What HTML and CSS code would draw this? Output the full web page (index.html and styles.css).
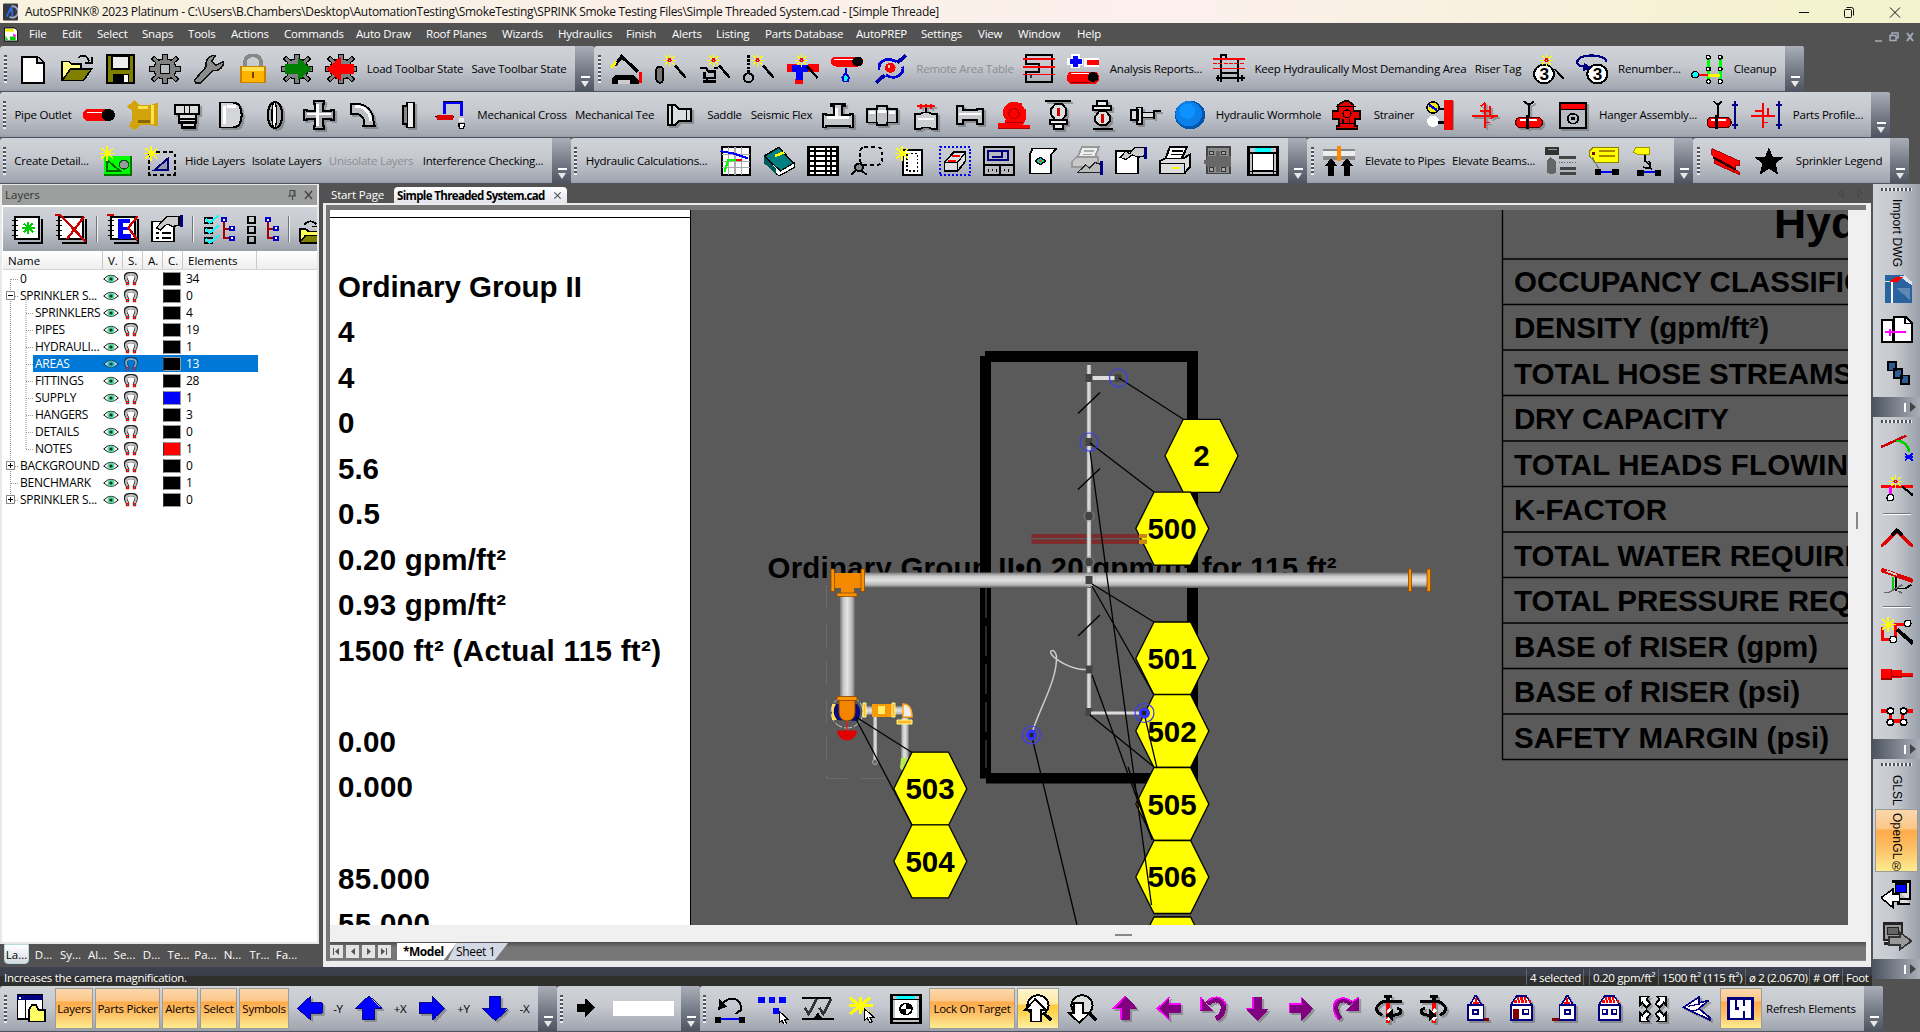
FILE: index.html
```html
<!DOCTYPE html>
<html lang="en">
<head>
<meta charset="utf-8">
<title>AutoSPRINK 2023 Platinum</title>
<link rel="stylesheet" href="styles.css">
</head>
<body>
<svg class="defs" width="0" height="0" aria-hidden="true">
  <defs>
    <g id="spark"><path d="M5 0v3M5 7v3M0 5h3M7 5h3M1.500 1.500l2 2M6.500 6.500l2 2M8.500 1.500l-2 2M3.500 6.500l-2 2" stroke="#ff0" stroke-width="1.200"/><path d="M4 3.500h2v1h1v1H6v1H4v-1H3v-1h1z" fill="red"/><path d="M4.500 4.500h1v1h-1z" fill="#0ff"/></g>
    <g id="star"><path d="M5 0v12M0 6h11M1 2l9 8M10 2l-9 8" stroke="#ff0" stroke-width="1.300"/></g>
    <g id="gearshape"><path d="M10 0h4v4l3 1 3-3 2 2-3 3 1 3h4v4h-4l-1 3 3 3-2 2-3-3-3 1v4h-4v-4l-3-1-3 3-2-2 3-3-1-3H0v-4h4l1-3-3-3 2-2 3 3 3-1z" fill="#808080" stroke="#000" stroke-width="1"/></g>

    <symbol id="new" viewBox="0 0 24 24"><path d="M4 2h11l5 5v16H4z" fill="#fff" stroke="#000" stroke-width="1.600"/><path d="M15 2v5h5" fill="#ccc" stroke="#000" stroke-width="1.400"/></symbol>
    <symbol id="open" viewBox="0 0 24 24"><path d="M1 21V6h5l2 2h7v4" fill="#ff8" stroke="#000" stroke-width="1.400"/><path d="M1 21l6-9h16l-6 9z" fill="#808000" stroke="#000" stroke-width="1.200"/><path d="M13 3c3-3 7-2 8 3M23 2v5h-5" fill="none" stroke="#000" stroke-width="1.400"/></symbol>
    <symbol id="save" viewBox="0 0 24 24"><path d="M1.500 1h20v22h-20z" fill="#808000" stroke="#000" stroke-width="1.600"/><path d="M5 2h13v10H5z" fill="#eee" stroke="#000" stroke-width="1.200"/><path d="M6 16h12v7H6z"/><path d="M14 17h3v5h-3z" fill="#fff"/></symbol>
    <symbol id="gear" viewBox="0 0 24 24"><use href="#gearshape"/><path d="M8.500 8.500h7v7h-7z" fill="#b8bbc0" stroke="#000"/></symbol>
    <symbol id="wrench" viewBox="0 0 24 24"><path d="M1 21l9-11c-1-5 2-9 7-9l-3 5 3 3 6-3c0 5-4 8-8 7L6 23H2z" fill="#8c8c8c" stroke="#111" stroke-width="1.200"/></symbol>
    <symbol id="lock" viewBox="0 0 24 24"><path d="M6 10V6a6 5 0 0 1 12 0v4" fill="none" stroke="#888" stroke-width="3"/><path d="M3 10h18v13H3z" fill="#ffb400" stroke="#c98300"/><path d="M3.500 10.500h17v3h-17z" fill="#ffe050"/><path d="M11 14h2v5h-2z" fill="#6b4700"/></symbol>
    <symbol id="gearload" viewBox="0 0 24 24"><use href="#gearshape"/><path d="M3 8h10V3l10 9-10 9v-5H3z" fill="#008000"/></symbol>
    <symbol id="gearsave" viewBox="0 0 24 24"><use href="#gearshape"/><path d="M22 8H12V2L1 12l11 10v-6h10z" fill="red"/></symbol>

    <symbol id="crane" viewBox="0 0 24 24"><path d="M3 9L8 2l12 12" fill="none" stroke="#000" stroke-width="2.600"/><path d="M0 11l4-5" stroke="#fff700" stroke-width="2"/><path d="M22 14v9" stroke="red" stroke-width="2"/><path d="M3 17h14l4 4v3H1v-5z"/><path d="M5 21h9v3H5z" fill="#ccc"/></symbol>
    <symbol id="wandpipe" viewBox="0 0 24 24"><rect x="1" y="10" width="5" height="13" rx="2.500" fill="#777" stroke="#000" stroke-width="1.500"/><path d="M15 9l8 10" stroke="#000" stroke-width="2"/><use href="#spark" x="6" y="0"/></symbol>
    <symbol id="wandcart" viewBox="0 0 24 24"><path d="M1 11h4l2 3h6M4 14v5h8v-5M3 22h10M6 19v3M11 11h3" fill="none" stroke="#000" stroke-width="1.700"/><path d="M15 9l8 10" stroke="#000" stroke-width="2"/><use href="#spark" x="6" y="0"/></symbol>
    <symbol id="wandhook" viewBox="0 0 24 24"><path d="M4 1v15" stroke="#000" stroke-width="2" stroke-dasharray="2 1"/><circle cx="4" cy="19" r="3.500" fill="none" stroke="#000" stroke-width="1.600"/><path d="M15 9l8 10" stroke="#000" stroke-width="2"/><use href="#spark" x="6" y="0"/></symbol>
    <symbol id="wandtee" viewBox="0 0 24 24"><path d="M0 8h8v6H0zM16 8h8v6h-8zM6 20h6v4H6z" fill="red"/><path d="M4 9h12v5h-4v7H7v-7H4z" fill="#00f"/><path d="M15 10l8 9" stroke="#000" stroke-width="2"/><use href="#spark" x="6" y="0"/></symbol>
    <symbol id="pipedrop" viewBox="0 0 24 24"><rect x="0" y="2" width="24" height="8" rx="3.500" fill="red"/><path d="M2 4h18" stroke="#fff" stroke-width=".8"/><circle cx="20" cy="6" r="4" fill="#000"/><path d="M11 11v4M8.500 19l2.500-4 2.500 4-1 3h-3z" fill="#0ff" stroke="#0000d0" stroke-width="1.500"/></symbol>
    <symbol id="orbit" viewBox="0 0 24 24"><path d="M1 23l6-6M17 7l6-6" stroke="#00a" stroke-width="2.800"/><path d="M3 13C2 6 8 2 16 6M21 10c1 7-6 11-13 7" fill="none" stroke="#0000d8" stroke-width="2.200"/><circle cx="11.500" cy="11" r="4" fill="red"/><circle cx="10.500" cy="10" r="1" fill="#fcc"/></symbol>
    <symbol id="areatable" viewBox="0 0 24 24"><path d="M2 1h20v21H2v-8h10V8H2z" fill="none" stroke="#000" stroke-width="1.600"/><path d="M0 4h24M0 10.500h24M0 16.500h24" stroke="red" stroke-width="1.300"/><path d="M6 4v1M6 17v2M17 10v1" stroke="#333"/></symbol>
    <symbol id="plusminus" viewBox="0 0 24 24"><path d="M3 0h7v11H3zM0 3h12v6H0zM13 3h11v7H13z" fill="#fff"/><path d="M6.500 1.500v9M2 6h9" stroke="#00f" stroke-width="3.500"/><path d="M15 5h9v4h-9z" fill="red"/><rect y="14" width="24" height="10" rx="4" fill="red"/><path d="M3 15.500h15" stroke="#fff"/><path d="M3 22.500h14" stroke="#800"/><circle cx="19.500" cy="18.500" r="4"/></symbol>
    <symbol id="demand" viewBox="0 0 24 24"><path d="M6 22V1h4v3h9v18M6 15h13M2 19h22" fill="none" stroke="#000" stroke-width="1.500"/><path d="M0 4h24M0 11.500h24" stroke="red" stroke-width="1.400"/><path d="M0 7.500h24" stroke="red" stroke-width="1.400" stroke-dasharray="3 1"/><path d="M4 16.500v5M22 16.500v5" stroke="#000" stroke-width="1.500"/></symbol>
    <symbol id="risertag" viewBox="0 0 24 24"><circle cx="9" cy="16" r="7.500" fill="#fff" stroke="#000" stroke-width="1.500"/><text x="5.500" y="21" font-size="13" class="t3">3</text><path d="M17 12l7 8" stroke="#000" stroke-width="1.500"/><use href="#spark" x="6"/></symbol>
    <symbol id="renum" viewBox="0 0 24 24"><circle cx="16" cy="16" r="7.500" fill="#fff" stroke="#000" stroke-width="1.500"/><text x="12.500" y="21" font-size="13" class="t3">3</text><path d="M23 6C21 0 6 0 2 4c-3 4 0 6 6 6" fill="none" stroke="#000080" stroke-width="1.800"/><path d="M6 7l6 4-7 3z" fill="#000080"/></symbol>
    <symbol id="cleanup" viewBox="0 0 24 24"><path d="M13 4v16M22 4v16" stroke="#0f0" stroke-width="2"/><path d="M13 17h9" stroke="#ff0" stroke-width="2.500"/><path d="M4 17h9" stroke="red" stroke-width="1.500"/><circle cx="3" cy="16.500" r="2.500" fill="#0ff" stroke="#000"/><g fill="#fff" stroke="#000"><circle cx="13" cy="2.500" r="1.500"/><circle cx="22" cy="2.500" r="1.500"/><circle cx="13" cy="12" r="1.500"/><circle cx="22" cy="12" r="1.500"/><circle cx="13" cy="22" r="1.500"/><circle cx="22" cy="22" r="1.500"/></g></symbol>

    <symbol id="pipe" viewBox="0 0 24 24"><path d="M3 7h16v10H3l-3-3v-4z" fill="red"/><path d="M3 10h12" stroke="#fff" stroke-width="1.500"/><circle cx="19" cy="12" r="5"/></symbol>
    <symbol id="brass" viewBox="0 0 24 24"><path d="M0 5l6-5 3 4h9l5-2v19l-6-1h-7l-4 4-5-3 3-5V9z" fill="#d3a30c"/><path d="M8 6h8M19 4v15" stroke="#ffe14d" stroke-width="2.500"/><path d="M8 17h9" stroke="#8b6500" stroke-width="2.500"/></symbol>
    <symbol id="plug" viewBox="0 0 24 24"><g fill="#ddd" stroke="#000" stroke-width="1.700"><path d="M3 4h18v7H3z"/><path d="M6 11h13v4H6zM6 15h13v3H6zM8 18h10v4H8z"/><path d="M10 4v7M14 4v7" stroke-width="1"/></g></symbol>
    <symbol id="cap" viewBox="0 0 24 24"><path d="M4 2h9c5 0 7 4 7 10s-2 10-7 10H4z" fill="#d4d5d9" stroke="#000" stroke-width="1.500"/><path d="M7 5v14M9 5h7" stroke="#fff" stroke-width="2"/></symbol>
    <symbol id="coupling" viewBox="0 0 24 24"><ellipse cx="12" cy="12" rx="5.500" ry="10.500" fill="#aaa" stroke="#000" stroke-width="1.600"/><ellipse cx="11.500" cy="12" rx="1.800" ry="10" fill="#fff" stroke="#000"/></symbol>
    <symbol id="cross" viewBox="0 0 24 24"><path d="M8 1h8v2h-1v6h6V8h2v8h-2v-1h-6v6h1v2H8v-2h1v-6H3v1H1V8h2v1h6V3H8z" fill="#aaacb0" stroke="#000" stroke-width="1.500"/><path d="M11 3v18M3 11h18" stroke="#fff" stroke-width="2"/></symbol>
    <symbol id="elbow" viewBox="0 0 24 24"><path d="M3 3h3c9 0 14 6 14 15l1 3h-9l1-3c0-4-3-7-7-7H3z" fill="#bcbec2" stroke="#000" stroke-width="1.500"/><path d="M6 5c7 0 11 4 12 12" stroke="#fff" fill="none" stroke-width="2"/></symbol>
    <symbol id="flange" viewBox="0 0 24 24"><path d="M12 2h5v20h-5z" fill="#eee" stroke="#000" stroke-width="1.500"/><path d="M12 5H9v14h3" fill="#888" stroke="#000" stroke-width="1.300"/></symbol>
    <symbol id="drain" viewBox="0 0 24 24"><path d="M7 11V2h13v11" fill="none" stroke="#00f" stroke-width="2.500"/><path d="M7 1h13" stroke="#000"/><path d="M0 13h14" stroke="#000"/><rect x="1" y="12" width="13" height="4" rx="2" fill="#d00"/><circle cx="20" cy="16" r="2" fill="#eee"/><path d="M18 19h4v2l-1 2h-2l-1-2z" fill="#fff" stroke="#000"/></symbol>
    <symbol id="reducer" viewBox="0 0 24 24"><path d="M3 4h5l3 3h9v10h-9l-3 3H3z" fill="#dcdde0" stroke="#000" stroke-width="1.500"/><path d="M6 4v16M17 7v10" stroke="#000" stroke-width="1.300"/></symbol>
    <symbol id="tee" viewBox="0 0 24 24"><path d="M7 3h10v2h-2v7h6v-1h2v11h-2v-1H3v1H1V11h2v1h6V5H7z" fill="#c6c8cc" stroke="#000" stroke-width="1.500"/><path d="M11 6v8M4 14h16" stroke="#fff" stroke-width="2"/></symbol>
    <symbol id="coup2" viewBox="0 0 24 24"><path d="M1 7h7V5h8v2h7v11h-7v2H8v-2H1z" fill="#bfc1c5" stroke="#000" stroke-width="1.500"/><path d="M8 7v11M16 7v11" stroke="#000"/><path d="M2 10h5M9 9h6M17 10h5" stroke="#fff" stroke-width="2"/></symbol>
    <symbol id="valve" viewBox="0 0 24 24"><path d="M5 5h14M8 3v4M12 3v4M16 3v4" stroke="red" fill="none" stroke-width="1.300"/><path d="M4 11h4l2-1h4l2 1h4v12h-4l-2-1h-4l-2 1H4z" fill="#cfd0d4" stroke="#000" stroke-width="1.500"/><path d="M12 6v4" stroke="#000" stroke-width="2"/><path d="M6 15h12" stroke="#fff" stroke-width="2"/></symbol>
    <symbol id="spool" viewBox="0 0 24 24"><path d="M2 5h5v3h10V7h5v12h-5v-3H7v3H2z" fill="#c6c8cc" stroke="#000" stroke-width="1.500"/><path d="M4 11h16" stroke="#fff" stroke-width="2"/></symbol>
    <symbol id="pump" viewBox="0 0 24 24"><path d="M10 2h8v5h3v8l-2 5h5v3H0v-5h5z" fill="red"/><circle cx="12" cy="10" r="8.500" fill="red"/><circle cx="12" cy="11" r="4" fill="none" stroke="#b00"/><path d="M0 22.500h24M5 18h14" stroke="#a00"/></symbol>
    <symbol id="uphead" viewBox="0 0 24 24"><path d="M2 1h20" stroke="#000" stroke-width="1.500"/><path d="M10 3h5l3 4v5l-3 4h-5l-3-4V7z" fill="#ddd" stroke="#000" stroke-width="1.400"/><path d="M6 16h13v3H6zM9 19h7v4H9z" fill="#eee" stroke="#000" stroke-width="1.400"/><path d="M12.500 6v7" stroke="#c00" stroke-width="2.500"/></symbol>
    <symbol id="pendent" viewBox="0 0 24 24"><path d="M5 23h15" stroke="#000" stroke-width="1.500"/><path d="M8 1h8v4H8zM5 5h14v3H5z" stroke="#000" stroke-width="1.400" fill="#eee"/><path d="M10 9h5l3 4v4l-3 3h-5l-3-3v-4z" fill="#ddd" stroke="#000" stroke-width="1.400"/><path d="M12.500 11v7" stroke="#c00" stroke-width="2.500"/></symbol>
    <symbol id="sidewall" viewBox="0 0 24 24"><path d="M1 8h5v8H1zM5 6h4v13H5zM9 10h9v4H9z" fill="#ddd" stroke="#000" stroke-width="1.400"/><path d="M18 15V9h5" stroke="#000" stroke-width="1.400" fill="none"/></symbol>
    <symbol id="ball" viewBox="0 0 24 24"><circle cx="12" cy="12" r="11.500" fill="#0057b0"/><circle cx="11" cy="11" r="10" fill="#0a80e8"/><circle cx="10" cy="9" r="6" fill="#0e92ff"/></symbol>
    <symbol id="hydrant" viewBox="0 0 24 24"><path d="M10 1h3l4 3v5h5v6h-4v6h2v2H4v-2h2v-6H1V9h4V4z" fill="#e80000" stroke="#100" stroke-width="1.300"/><path d="M4 5h15M6 19h12M9 15v4M14 15v4" stroke="#000"/><circle cx="12" cy="11" r="3" fill="#f00" stroke="#000"/></symbol>
    <symbol id="fdc" viewBox="0 0 24 24"><path d="M14 0h7v24h-7z" fill="red"/><path d="M21.500 1v23" stroke="#888"/><circle cx="6" cy="6" r="4.500" fill="#ee0" stroke="#000" stroke-width="1.300"/><path d="M3 4l6 4" stroke="#00f" stroke-width="2"/><circle cx="6" cy="17" r="4.500" fill="#fff"/><path d="M10 7h4M10 18h4" stroke="#000" stroke-width="2"/></symbol>
    <symbol id="gimbal" viewBox="0 0 24 24"><path d="M12 2v20M2 13h20M8 9h8M16 5v8M12 18h4M9 5l3-3M16 15l3-2" fill="none" stroke="red" stroke-width="1.400"/></symbol>
    <symbol id="hangpipe" viewBox="0 0 24 24"><path d="M8 1l4 3 4-3M12 4v10" fill="none" stroke="#000" stroke-width="1.600"/><rect x="2" y="14" width="20" height="8" rx="3.500" fill="red" stroke="#400"/><path d="M5 16h13" stroke="#fff" stroke-width="1.500"/><path d="M11 12v11" stroke="#000" stroke-width="2"/></symbol>
    <symbol id="washer" viewBox="0 0 24 24"><path d="M2 2h20v20H2z" fill="#b9bcc2" stroke="#000" stroke-width="1.600"/><path d="M3 3h18v4H3z" fill="red"/><path d="M2 7.500h20" stroke="#000"/><circle cx="12" cy="15" r="4" fill="none" stroke="#000" stroke-width="1.200"/><circle cx="12" cy="15" r="1.500"/></symbol>
    <symbol id="hangdim" viewBox="0 0 24 24"><path d="M5 1l3 3 3-3M8 4v10" fill="none" stroke="#000" stroke-width="1.500"/><rect y="14" width="18" height="8" rx="3.500" fill="red" stroke="#400"/><path d="M3 16h11" stroke="#fff"/><path d="M7 12v11" stroke="#000" stroke-width="2"/><path d="M21 1v22M19 4h4M19 20h4" stroke="#000080" stroke-width="1.500"/></symbol>
    <symbol id="gimdim" viewBox="0 0 24 24"><path d="M9 2v20M0 13h18M3 9h6M13 6v6M9 18h4" fill="none" stroke="red" stroke-width="1.500"/><path d="M21 1v22M19 4h4M19 20h4" stroke="#000080" stroke-width="1.500"/></symbol>

    <symbol id="detail" viewBox="0 0 24 24"><path d="M3 8h20v15H3z" fill="#0f0"/><path d="M3 23h20V8" fill="none" stroke="#007800" stroke-width="1.600"/><path d="M5 20V11l10 9z" fill="none" stroke="#060" stroke-width="1.500"/><circle cx="18" cy="15" r="3.500" fill="#999" stroke="#00501a"/><use href="#star"/></symbol>
    <symbol id="hidesel" viewBox="0 0 24 24"><path d="M4 5h19v18H4z" fill="none" stroke="#000" stroke-width="1.600" stroke-dasharray="3 2"/><path d="M8 19l10-9v9z" fill="#99a" stroke="#000080" stroke-width="1.500"/><use href="#star"/></symbol>
    <symbol id="graph" viewBox="0 0 24 24"><path d="M2 1h21v22H2z" fill="#fff" stroke="#000" stroke-width="1.600"/><path d="M7 1v22M12 1v22M17 1v22M2 7h21M2 12h21M2 17h21" stroke="#aaa" stroke-width=".8"/><path d="M1 4l10 2 11 4" stroke="#00f" fill="none" stroke-width="1.600"/><path d="M4 21l3-10h6" stroke="#0f0" fill="none" stroke-width="1.600"/><path d="M13 11h4" stroke="red" stroke-width="1.500"/></symbol>
    <symbol id="book" viewBox="0 0 24 24"><path d="M1 8L12 1l11 13-10 8z" fill="#008080" stroke="#000" stroke-width="1.200"/><path d="M1 8v5l11 11 12-7v-4l-11 7z" fill="#fff" stroke="#000"/><path d="M1 9v5l9 9v-5z" fill="#005a5a"/><path d="M9 8l7-3" stroke="#ff0" stroke-width="2"/></symbol>
    <symbol id="grid" viewBox="0 0 24 24"><path d="M1 1h22v22H1z" fill="#fff" stroke="#000" stroke-width="1.700"/><path d="M6 1v22M14 1v22M18 1v22M1 4h22M1 8h22M1 12h22M1 16h22M1 20h22" stroke="#000" stroke-width="1.300"/></symbol>
    <symbol id="maglasso" viewBox="0 0 24 24"><rect x="7" y="1" width="16" height="14" rx="3" fill="none" stroke="#000" stroke-width="1.500" stroke-dasharray="3 2"/><circle cx="6" cy="17" r="3" fill="#888" stroke="#000" stroke-width="1.500"/><path d="M4 19l-4 4M8 20l4 3" stroke="#000" stroke-width="1.500"/></symbol>
    <symbol id="newpage" viewBox="0 0 24 24"><path d="M6 3h14v20H6z" fill="#fff" stroke="#000" stroke-width="1.500"/><path d="M9 6h8v14H9z" fill="none" stroke="#000" stroke-dasharray="1.500 1.500"/><use href="#star"/></symbol>
    <symbol id="eraser" viewBox="0 0 24 24"><path d="M.7.700h22.600v22.600H.7z" fill="none" stroke="#00f" stroke-width="1.400" stroke-dasharray="1.500 1.500"/><path d="M4 13l7-8h9v7l-6 8H4z" fill="#ddd" stroke="#000" stroke-width="1.300"/><path d="M4 13h10v7M14 13l6-8" stroke="#000" fill="none"/><path d="M7 12h6M10 8h6" stroke="red" stroke-width="1.500"/></symbol>
    <symbol id="board" viewBox="0 0 24 24"><path d="M1 1h22v22H1z" fill="#b9bbc0" stroke="#000" stroke-width="1.600"/><path d="M4 4h15v7H4zM14 4v5H7" fill="none" stroke="#000080" stroke-width="1.400"/><path d="M1 15h22M13 15v8" stroke="#000" stroke-width="1.400" fill="none"/><path d="M4 18v3M7 18v2M10 18v3M16 18v2M19 18v3" stroke="#000"/></symbol>
    <symbol id="preview" viewBox="0 0 24 24"><path d="M4 2h18l-4 5v15H2V7z" fill="#fff" stroke="#000" stroke-width="1.400"/><path d="M6 12l4-3 4 3-4 3z" fill="#0cc" stroke="#000"/><path d="M9 12h2" stroke="#c60" stroke-width="2"/></symbol>
    <symbol id="printoff" viewBox="0 0 24 24"><path d="M8 1h13l-3 8H5z" fill="#eee" stroke="#999" stroke-width="1.400"/><path d="M1 12l3-3h16v8H1z" fill="#c8c8c8" stroke="#999" stroke-width="1.400"/><path d="M10 4h7M9 7h7" stroke="#aaa"/><path d="M5 21l6-6 3 3 4-5 5 2v6H10z" fill="#bbb" stroke="#222"/><path d="M23 12v11" stroke="#000080" stroke-width="2.500"/></symbol>
    <symbol id="props" viewBox="0 0 24 24"><path d="M1 4h16v18H1z" fill="#fff" stroke="#000" stroke-width="1.500"/><path d="M4 9l4-5 3 2 4-5h7v7l-5 1-4-2-5 4z" fill="#ccc" stroke="#000"/><path d="M23 1v9" stroke="#000080" stroke-width="2.500"/></symbol>
    <symbol id="print" viewBox="0 0 24 24"><path d="M8 1h13l-4 9H5z" fill="#fff" stroke="#000" stroke-width="1.500"/><path d="M1 12l3-2h14l5-3v10l-4 5H1z" fill="#ddd" stroke="#000" stroke-width="1.500"/><path d="M10 4h8M9 7h8M1 14h18v8" stroke="#000" fill="none"/><path d="M10 17.500h5" stroke="#ff0" stroke-width="2"/></symbol>
    <symbol id="puzzle" viewBox="0 0 24 24"><path d="M3 1h17v21H3z" fill="#8a8a8a" stroke="#444" stroke-width="1.400"/><path d="M5 4h3v3H5zM14 4h3v3h-3zM5 17h3v3H5zM14 17h3v3h-3z" fill="#aaa" stroke="#333" stroke-width=".8"/><path d="M3 8h7V4h3v4h8v9h-8v4h-3v-4H3v-3H1v-3h2z" fill="#686868"/></symbol>
    <symbol id="sheet" viewBox="0 0 24 24"><path d="M1 1h22v22H1z" fill="#c4c6cb" stroke="#000" stroke-width="1.700"/><path d="M4 6h16v14H4z" fill="#fff" stroke="#000" stroke-width="1.300"/><path d="M6 1.800h12v3H6z" fill="#0ff"/><path d="M1 5.500h22M1 20.500h22M4 20v3M20 20v3" stroke="#000"/></symbol>
    <symbol id="elev" viewBox="0 0 24 24"><path d="M0 2h24v9H0z" fill="#888"/><path d="M0 4h24v4H0z" fill="#eee"/><path d="M10.500 0h3v12h-3z" fill="#f80"/><path d="M6 10l5 6H8v8H4v-8H1zM18 10l5 6h-3v8h-4v-8h-3z"/></symbol>
    <symbol id="parts" viewBox="0 0 24 24"><path d="M1 1h10v6H1z" fill="#333"/><path d="M3 3h7" stroke="#999"/><path d="M5 9l4 3v9l-3 2-4-2v-9z" fill="#666"/><path d="M11 9h13M12 18h12M12 22h12" stroke="#444" stroke-width="2"/><path d="M11 13h13" stroke="#666" stroke-dasharray="1 1"/></symbol>
    <symbol id="tag" viewBox="0 0 24 24"><path d="M4 1h19v12H5L1 8V4z" fill="#ff0" stroke="#888000" stroke-width=".8"/><path d="M8 4h12M8 8h12" stroke="#a80"/><circle cx="4" cy="6" r="1.200" fill="#800"/><path d="M3 9l6 11" stroke="#777" fill="none"/><path d="M6 21h16" stroke="#00f" stroke-width="1.600"/><path d="M5 18h5v5H5zM18 18h5v5h-5z"/></symbol>
    <symbol id="tag2" viewBox="0 0 24 24"><path d="M3 1h10v6H5L1 5z" fill="#ff0" stroke="#990" stroke-width=".8"/><path d="M10 7v5l4 4M13 12l1 6-6-1" stroke="#000" fill="none" stroke-width="1.500"/><path d="M5 21h16" stroke="#00f" stroke-width="1.600"/><path d="M4 19h5v5H4zM17 19h5v5h-5z"/></symbol>
    <symbol id="beam" viewBox="0 0 24 24"><path d="M2 2l21 10v4l-3-1v4l3 2v2L4 14V9L2 7z" fill="red" stroke="#900" stroke-width=".7"/><path d="M3 9l17 10" stroke="#300" stroke-width="2"/></symbol>
    <symbol id="blackstar" viewBox="0 0 24 24"><path d="M12 1l3 8h8l-6 5 2 9-7-5-7 5 2-9-6-5h8z"/></symbol>

    <symbol id="panes" viewBox="0 0 24 24"><path d="M1 1h19v19H1z" fill="#fff" stroke="#000" stroke-width="1.300"/><path d="M1 1h19v4H1z" fill="#000080"/><path d="M2 2h2v2H2z" fill="#fff"/><path d="M7 5v15" stroke="#000" stroke-width="1.300"/><path d="M10 12l2-3h3l2 4h5v9H10z" fill="#ff6" stroke="#000" stroke-width="1.300"/></symbol>
    <symbol id="bleft" viewBox="0 0 24 24"><path d="M1 12L12 1v6h10v9H12v6z" fill="#00f" stroke="#000080" stroke-width=".8"/></symbol>
    <symbol id="bup" viewBox="0 0 24 24"><path d="M12 1l11 11h-6v10H7V12H1z" fill="#00f" stroke="#000080" stroke-width=".8"/></symbol>
    <symbol id="bright" viewBox="0 0 24 24"><path d="M22 12L12 1v6H1v9h11v6z" fill="#00f" stroke="#000080" stroke-width=".8"/></symbol>
    <symbol id="bdown" viewBox="0 0 24 24"><path d="M12 23L1 12h6V1h9v11h6z" fill="#00f" stroke="#000080" stroke-width=".8"/></symbol>
    <symbol id="kright" viewBox="0 0 24 24"><path d="M5 8h6V3l8 8-8 8v-5H5z"/></symbol>
    <symbol id="undim" viewBox="0 0 24 24"><path d="M6 8c8-9 16-2 14 5l-4 3" fill="none" stroke="#000" stroke-width="1.600"/><path d="M3 13l1-9 6 6z"/><path d="M3 20h18" stroke="#00f" stroke-width="1.600"/><path d="M1 18h4v5H1zM19 18h4v5h-4z"/></symbol>
    <g id="cursor"><path d="M0 0v9l2-2 2 4 1.500-1L4 6.500h3z" fill="#fff" stroke="#000"/></g>
    <symbol id="selblue" viewBox="0 0 24 24"><path d="M0 2h5v5H0zM8 2h5v5H8zM16 2h5v5h-5zM11 11h5v5h-5z" fill="#00f"/><use href="#cursor" x="16" y="14"/></symbol>
    <symbol id="checks" viewBox="0 0 24 24"><path d="M0 3h22M0 20h24" stroke="#000" stroke-width="1.500"/><path d="M2 11l3 5 6-12M13 11l3 5 6-12" fill="none" stroke="#333" stroke-width="2"/><path d="M8 20l4-5 4 5z"/></symbol>
    <symbol id="selstar" viewBox="0 0 24 24"><path d="M2 9h18M3 3l15 13M18 3L3 16M11 2v14" stroke="#ff0" stroke-width="2.400"/><use href="#cursor" x="14" y="12"/></symbol>
    <symbol id="target" viewBox="0 0 24 24"><path d="M1 1h22v22H1z" fill="#bfc1c6" stroke="#000" stroke-width="1.700"/><path d="M5 1.800h14v2H5z" fill="#0ff"/><path d="M4 5h16v15H4z" fill="#fff"/><path d="M1 4.500h22M1 20h22" stroke="#000"/><circle cx="12" cy="12" r="4.500" fill="#fff" stroke="#000" stroke-width="1.300"/><path d="M12 7.500V12h4.500a5 5 0 0 0-4.500-4.500M12 16.500V12H7.500a5 5 0 0 0 4.500 4.500"/></symbol>
    <symbol id="zoomin" viewBox="0 0 24 24"><circle cx="12" cy="9" r="8" fill="#fff" stroke="#000" stroke-width="1.500"/><path d="M16 15l6 6" stroke="#000" stroke-width="2.500"/><path d="M10 4l8 9h-4v9H7v-9H2z" fill="#fff" stroke="#000" stroke-width="1.500"/></symbol>
    <symbol id="zoomout" viewBox="0 0 24 24"><circle cx="12" cy="9" r="8" fill="#ddd" stroke="#000" stroke-width="1.500"/><path d="M17 15l6 6" stroke="#000" stroke-width="2.500"/><path d="M10 23l-8-8h4V7h7v8h5z" fill="#fff" stroke="#000" stroke-width="1.500"/></symbol>
    <symbol id="pup" viewBox="0 0 24 24"><path d="M12 1l10 11h-6v10H8V12H2z" fill="#800080"/><path d="M12 1L2 12h6v9" fill="none" stroke="#f0f" stroke-width="1.500"/></symbol>
    <symbol id="pleft" viewBox="0 0 24 24"><path d="M2 12L12 2v6h10v8H12v7z" fill="#800080"/><path d="M12 2L2 12l10 10M12 8h10" fill="none" stroke="#f0f" stroke-width="1.500"/></symbol>
    <symbol id="pdown" viewBox="0 0 24 24"><path d="M12 23L2 12h6V2h8v10h6z" fill="#800080"/><path d="M2 12h6V2" fill="none" stroke="#f0f" stroke-width="1.500"/></symbol>
    <symbol id="pright" viewBox="0 0 24 24"><path d="M22 12L12 2v6H2v8h10v7z" fill="#800080"/><path d="M2 16V8h10V2" fill="none" stroke="#f0f" stroke-width="1.500"/></symbol>
    <symbol id="pccw" viewBox="0 0 24 24"><path d="M7 8C12 1 22 5 20 13q-1 6-6 8" fill="none" stroke="#800080" stroke-width="4.500"/><path d="M1 2v12h11z" fill="#800080"/><path d="M1.500 2v11M7 5.500C12 0 20 1 22.500 9" fill="none" stroke="#f0f" stroke-width="1.400"/></symbol>
    <symbol id="pcw" viewBox="0 0 24 24"><path d="M17 8C12 1 2 5 4 13q1 6 4 8" fill="none" stroke="#800080" stroke-width="4.500"/><path d="M23 2v12H12z" fill="#800080"/><path d="M23 2l-5 4M17 5.500C10 0 1 3 2 13q1 5 4 9" fill="none" stroke="#f0f" stroke-width="1.400"/></symbol>
    <symbol id="rot1" viewBox="0 0 24 24"><path d="M11.500 1v22" stroke="red" stroke-width="3"/><path d="M11 5l2-2M11 15l2-3M11 21l2-3" stroke="#fff" stroke-width="2.500"/><path d="M8 2h6M22 6H8C1 9 1 14 7 17M18 11c6 3 2 6-4 6h-4" fill="none" stroke="#000" stroke-width="2.300"/><path d="M15 12v10l-5-5zM10 1h3v4h-3z"/></symbol>
    <symbol id="rot2" viewBox="0 0 24 24"><path d="M12.500 1v22" stroke="red" stroke-width="3"/><path d="M12 5l2-2M12 15l2-3M12 21l2-3" stroke="#fff" stroke-width="2.500"/><path d="M10 2h6M2 6h14c7 3 7 8 1 11M6 11c-6 3-2 6 4 6h4" fill="none" stroke="#000" stroke-width="2.300"/><path d="M9 12v10l5-5zM11 1h3v4h-3z"/></symbol>
    <symbol id="house1" viewBox="0 0 24 24"><path d="M14 20h8v3h-8z" fill="#800000"/><path d="M4 9h13v13H4z" fill="#fff" stroke="#000080" stroke-width="1.600"/><path d="M10.500 0l5 9h-10z" fill="#fff" stroke="#000080" stroke-width="1.400"/><path d="M10.500 3v5M8 7h5" stroke="red" stroke-width="1.500"/><path d="M8.500 13h4v4h-4z" fill="#fff" stroke="#000080" stroke-width="1.600"/></symbol>
    <symbol id="house2" viewBox="0 0 24 24"><path d="M3 9h18v13H3z" fill="#fff" stroke="#000080" stroke-width="1.600"/><path d="M8 1h8l5 8H3z" fill="#fff" stroke="#000080" stroke-width="1.400"/><path d="M8 3h9M6 6h14" stroke="red" stroke-width="2.500" stroke-dasharray="2 1"/><path d="M5 12h5v9H5z" fill="#800000"/><path d="M13 13h5v4h-5z" fill="#fff" stroke="#000080" stroke-width="1.400"/></symbol>
    <symbol id="house3" viewBox="0 0 24 24"><path d="M1 20h8v3H1z" fill="#800000"/><path d="M7 9h13v13H7z" fill="#fff" stroke="#000080" stroke-width="1.600"/><path d="M13.500 0l5 9h-10z" fill="#fff" stroke="#000080" stroke-width="1.400"/><path d="M13.500 3v5M11 7h5" stroke="red" stroke-width="1.500"/><path d="M11.500 13h4v4h-4z" fill="#fff" stroke="#000080" stroke-width="1.600"/></symbol>
    <symbol id="house4" viewBox="0 0 24 24"><path d="M3 9h18v13H3z" fill="#fff" stroke="#000080" stroke-width="1.600"/><path d="M8 1h8l5 8H3z" fill="#fff" stroke="#000080" stroke-width="1.400"/><path d="M8 3h9M6 6h14" stroke="red" stroke-width="2.500" stroke-dasharray="2 1"/><path d="M6 13h4v4H6zM14 13h4v4h-4z" fill="#fff" stroke="#000080" stroke-width="1.400"/></symbol>
    <symbol id="fit" viewBox="0 0 24 24"><path d="M2 2h7L7 4l3 4-3 3-3-4-2 2zM22 2h-7l2 2-3 4 3 3 3-4 2 2zM2 22h7l-2-2 3-4-3-3-3 4-2-2zM22 22h-7l2-2-3-4 3-3 3 4 2-2z" fill="#fff" stroke="#000" stroke-width="1.400"/></symbol>
    <symbol id="plane" viewBox="0 0 24 24"><path d="M1 11L14 2v5l8-2-8 7 9 8v2z" fill="#fff" stroke="#000080" stroke-width="1.500"/><path d="M5 10l10-2M7 14l8-1" stroke="#000080"/></symbol>
    <symbol id="plan" viewBox="0 0 24 24"><path d="M2 3h20v18H2z" fill="#fff" stroke="#000080" stroke-width="2"/><path d="M8 3v9h3M15 3v7M15 14v7" stroke="#000080" stroke-width="2" fill="none"/></symbol>

    <symbol id="mapfold" viewBox="0 0 24 24"><path d="M3 1h15l5 5v17H3z" fill="#2a639f"/><path d="M14 2l9 7v-3l-5-5z" fill="#dce6f0"/><path d="M3 6h10" stroke="#e8eef4" stroke-width="1.500"/><path d="M8.500 5v18" stroke="#fff" stroke-width="1.400"/><path d="M7 6l4-4h6l-5 5z" fill="red"/><path d="M11 11h11v10z" fill="#5d88b4"/></symbol>
    <symbol id="pages" viewBox="0 0 24 24"><path d="M1 3h8v18H1zM10 1h9l4 4v16H10z" fill="#fff" stroke="#000" stroke-width="1.500"/><path d="M18 1v5h5" fill="none" stroke="#000"/><path d="M3 13h16M7 10v6" stroke="#f0f" stroke-width="1.500"/></symbol>
    <symbol id="cubes" viewBox="0 0 24 24"><path d="M5 3h6v7H5zM10 9h6v7h-6zM15 14h6v7h-6z" fill="#2b5d94" stroke="#000" stroke-width="1.500"/></symbol>
    <symbol id="armover" viewBox="0 0 24 24"><path d="M0 12l19-9" stroke="#c00" stroke-width="2"/><path d="M11 7c6 0 10 4 10 9" stroke="#0c0" stroke-width="2" fill="none"/><path d="M18 17l6 6M24 17l-6 6M18 20h6" stroke="#00f" stroke-width="1.300"/></symbol>
    <symbol id="wandline" viewBox="0 0 24 24"><path d="M0 10h24" stroke="red" stroke-width="2"/><path d="M7 10v6" stroke="#f0f" stroke-width="2"/><circle cx="7" cy="19" r="2.500" fill="#fff" stroke="#000"/><path d="M16 10l8 7" stroke="#000" stroke-width="1.700"/><use href="#spark" x="6" y="1"/></symbol>
    <symbol id="peak" viewBox="0 0 24 24"><path d="M0 18L12 6l12 12" stroke="#d00" stroke-width="2.500" fill="none"/><path d="M8 9l4-4 4 4" stroke="#000" stroke-width="2.500" fill="none"/></symbol>
    <symbol id="slope" viewBox="0 0 24 24"><path d="M0 3l24 9" stroke="#d00" stroke-width="3.500"/><path d="M4 4l8 3" stroke="#ccc" stroke-width="1.500"/><path d="M9 9v11" stroke="#0c0" stroke-width="2"/><path d="M11.500 9v11M12 18h6l5-3" stroke="#000" stroke-width="1.500" fill="none"/><path d="M2 21h4l10-6M13 20l3 2" stroke="#666" stroke-width="1.200" fill="none"/></symbol>
    <symbol id="wandroute" viewBox="0 0 24 24"><path d="M1 8v10h10V6h8" stroke="red" stroke-width="2.500" fill="none"/><path d="M12 10l12 11" stroke="#000" stroke-width="3"/><circle cx="20" cy="5" r="2.500" fill="#fff" stroke="#000"/><circle cx="9" cy="18" r="2.500" fill="#fff" stroke="#000"/><use href="#star" x="0" y="0"/></symbol>
    <symbol id="redtool" viewBox="0 0 24 24"><path d="M0 8h8v8H0zM8 9h8v6H8zM16 11h8v3h-8z" fill="red"/><path d="M0 16h8v-8M8 14h8M16 14h8" stroke="#900" fill="none"/></symbol>
    <symbol id="nodes" viewBox="0 0 24 24"><path d="M0 8h7v8h9V8h8" stroke="red" stroke-width="2.500" fill="none"/><g fill="#fff" stroke="#000" stroke-width="1.200"><circle cx="7" cy="8" r="2.400"/><circle cx="17" cy="8" r="2.400"/><circle cx="7" cy="17" r="2.400"/><circle cx="17" cy="17" r="2.400"/></g></symbol>
    <symbol id="moncolor" viewBox="0 0 24 24"><path d="M8 2h14v14h-9v4h9" fill="#ddd" stroke="#000" stroke-width="1.800"/><path d="M11 4h8v7h-8z" fill="#00f" stroke="#000"/><path d="M0 15l9-7v4h5v6H9v5z" fill="#fff" stroke="#000" stroke-width="1.200"/></symbol>
    <symbol id="mongray" viewBox="0 0 24 24"><path d="M2 2h14v13H2zM2 18h14" fill="#999" stroke="#222" stroke-width="1.800"/><path d="M5 5h8v6H5z" fill="#666" stroke="#222"/><path d="M6 13h8V9l9 7-9 7v-4H6z" fill="#999" stroke="#333" stroke-width="1.300"/></symbol>

    <g id="notebook"><path d="M3 2h18v18H3z" fill="#fff" stroke="#000" stroke-width="1.600"/><path d="M23 4v19H5" stroke="#000" fill="none" stroke-width="1.400"/><path d="M1 5h4M1 9h4M1 13h4M1 17h4" stroke="#000"/></g>
    <symbol id="lnew" viewBox="0 0 24 24"><use href="#notebook"/><path d="M13 6v10M8 11h10M9.500 7.500l7 7M16.500 7.500l-7 7" stroke="#0c0" stroke-width="1.500"/></symbol>
    <symbol id="ldel" viewBox="0 0 24 24"><use href="#notebook"/><path d="M0 1h4l19 21M22 2L9 20" fill="none" stroke="#c00" stroke-width="1.800"/></symbol>
    <symbol id="ledit" viewBox="0 0 24 24"><use href="#notebook"/><path d="M8 4h9v3h-5v3h4v3h-4v3h6v4H8z" fill="#00f"/><path d="M0 1h5M23 2l-7 9 7 10" stroke="#c00" fill="none" stroke-width="1.800"/></symbol>
    <symbol id="lprops" viewBox="0 0 24 24"><path d="M1 6h16v16H1z" fill="#fff" stroke="#000" stroke-width="1.500"/><path d="M4 15h2M8 15h7M4 19h2M8 19h7" stroke="#000" stroke-width="1.400"/><path d="M4 11l8-9h9v7l-5 1-4-2-5 5z" fill="#ccc" stroke="#000"/><path d="M23 1v9" stroke="#000080" stroke-width="2.500"/></symbol>
    <symbol id="lchecks" viewBox="0 0 24 24"><path d="M1 3h6v4H1zM1 11h6v4H1zM1 19h6v4H1z" fill="none" stroke="#000" stroke-width="1.300"/><path d="M2 4l3 3 7-6M2 12l3 3 7-6M2 20l3 3 7-6" fill="none" stroke="#0ff" stroke-width="1.500"/><path d="M16 6v13h4M16 12h4" stroke="#a00000" fill="none" stroke-width="1.500"/><path d="M14 3h3v3h-3zM20 10h3v3h-3zM20 18h3v3h-3z" fill="#fff" stroke="#00c" stroke-width="1.500"/></symbol>
    <symbol id="ltree" viewBox="0 0 24 24"><path d="M1 2h5v5H1zM1 10h5v5H1zM1 18h5v5H1z" fill="none" stroke="#000" stroke-width="1.500"/><path d="M16 6v13h4M16 12h4" stroke="#a00000" fill="none" stroke-width="1.500"/><path d="M14 3h3v3h-3zM20 10h3v3h-3zM20 18h3v3h-3z" fill="#fff" stroke="#00c" stroke-width="1.500"/></symbol>
    <symbol id="lopen" viewBox="0 0 24 24"><path d="M1 22V12h4l2 2h12v4" fill="#ff5" stroke="#000" stroke-width="1.400"/><path d="M1 22l4-5h18l-4 6H1z" fill="#808000" stroke="#000" stroke-width="1.200"/><path d="M4 9c2-4 6-4 9-1M14 5v5h-4" fill="none" stroke="#000" stroke-width="1.400"/></symbol>
    <symbol id="eye" viewBox="0 0 16 10"><path d="M.7 5Q8-2.500 15.300 5 8 12 .7 5z" fill="#fff" stroke="#111"/><circle cx="8" cy="5" r="3.500" fill="#59d69b"/><circle cx="8" cy="5" r="1.600" fill="#032"/></symbol>
    <symbol id="magnet" viewBox="0 0 14 14"><path d="M3.500 12.500V10C-1.500 2 4 1.500 7 1.500S15 2 10.500 10v2.500" fill="none" stroke="#222" stroke-width="3.400"/><path d="M3.500 11.500V10C-.5 3 4 2 7 2s7.500 1 3.500 8v1.500" fill="none" stroke="#c4c4c4" stroke-width="1.800"/><path d="M2 10.500h3M9 10.500h3M2 12.700h3M9 12.700h3" stroke="red" stroke-width="1.200"/></symbol>
  </defs>
</svg>

<header class="title">
  <svg class="logo" viewBox="0 0 16 18"><rect width="16" height="18" rx="1" fill="#35383f"/><path d="M9 3a6 6 0 1 1-2 11" fill="none" stroke="#aab" stroke-width="2"/><path d="M3 14L8 3h2l1 11H9V9H7l-2 5z" fill="#2d6cf0"/></svg>
  <span class="title-text">AutoSPRINK® 2023 Platinum - C:\Users\B.Chambers\Desktop\AutomationTesting\SmokeTesting\SPRINK Smoke Testing Files\Simple Threaded System.cad - [Simple Threade]</span>
  <svg class="winbtns" viewBox="0 0 110 20" fill="none" stroke="#111"><path d="M7 10.500h10"/><rect x="52.500" y="7.500" width="7" height="8" rx="1"/><path d="M54.500 5.500h5q2 0 2 2v6"/><path d="M98 5.500l10 10M108 5.500l-10 10"/></svg>
</header>
<nav class="menu">
  <svg class="mlogo" viewBox="0 0 16 16"><path d="M1 1h11l3 3v11H1z" fill="#fff" stroke="#000"/><path d="M2 2h9v3H2z" fill="#ee0"/><path d="M2 9l3 5H2zM7 10h6v4H7z" fill="#0c0"/><path d="M10 7l4 2-3 2z" fill="#f0f"/></svg>
  <span>File</span><span>Edit</span><span>Select</span><span>Snaps</span><span>Tools</span><span>Actions</span><span>Commands</span><span>Auto Draw</span><span>Roof Planes</span><span>Wizards</span><span>Hydraulics</span><span>Finish</span><span>Alerts</span><span>Listing</span><span>Parts Database</span><span>AutoPREP</span><span>Settings</span><span>View</span><span>Window</span><span>Help</span>
  <svg class="mdi" viewBox="0 0 44 14" fill="none" stroke="#a3acba" stroke-width="1.500"><path d="M1 11h7"/><path d="M16 5.500h6v5h-6zM18 5V3h6v5h-2"/><path d="M33 3l6 8M39 3l-6 8" stroke-width="2"/></svg>
</nav>

<div class="bar">
  <div class="tb tb-file"><i class="grip"></i>
    <svg class="ic"><use href="#new"/></svg><svg class="ic"><use href="#open"/></svg><svg class="ic"><use href="#save"/></svg><svg class="ic"><use href="#gear"/></svg><svg class="ic"><use href="#wrench"/></svg><svg class="ic"><use href="#lock"/></svg><svg class="ic"><use href="#gearload"/></svg><svg class="ic"><use href="#gearsave"/></svg>
    <span>Load Toolbar State</span><span>Save Toolbar State</span><b class="more"></b></div>
  <div class="tb tb-hyd"><i class="grip"></i>
    <svg class="ic"><use href="#crane"/></svg><svg class="ic"><use href="#wandpipe"/></svg><svg class="ic"><use href="#wandcart"/></svg><svg class="ic"><use href="#wandhook"/></svg><svg class="ic"><use href="#wandtee"/></svg><svg class="ic"><use href="#pipedrop"/></svg><svg class="ic"><use href="#orbit"/></svg>
    <span class="off">Remote Area Table</span><svg class="ic"><use href="#areatable"/></svg><svg class="ic"><use href="#plusminus"/></svg><span>Analysis Reports...</span><svg class="ic"><use href="#demand"/></svg><span>Keep Hydraulically Most Demanding Area</span><span>Riser Tag</span><svg class="ic"><use href="#risertag"/></svg><svg class="ic"><use href="#renum"/></svg><span>Renumber...</span><svg class="ic"><use href="#cleanup"/></svg><span>Cleanup</span><b class="more"></b></div>
</div>
<div class="bar">
  <div class="tb tb-parts"><i class="grip"></i>
    <span>Pipe Outlet</span><svg class="ic"><use href="#pipe"/></svg><svg class="ic"><use href="#brass"/></svg><svg class="ic sh"><use href="#plug"/></svg><svg class="ic sh"><use href="#cap"/></svg><svg class="ic sh"><use href="#coupling"/></svg><svg class="ic sh"><use href="#cross"/></svg><svg class="ic sh"><use href="#elbow"/></svg><svg class="ic sh"><use href="#flange"/></svg><svg class="ic"><use href="#drain"/></svg>
    <span>Mechanical Cross</span><span>Mechanical Tee</span><svg class="ic sh"><use href="#reducer"/></svg><span>Saddle</span><span>Seismic Flex</span>
    <svg class="ic sh"><use href="#tee"/></svg><svg class="ic sh"><use href="#coup2"/></svg><svg class="ic sh"><use href="#valve"/></svg><svg class="ic sh"><use href="#spool"/></svg><svg class="ic"><use href="#pump"/></svg><svg class="ic sh"><use href="#uphead"/></svg><svg class="ic sh"><use href="#pendent"/></svg><svg class="ic sh"><use href="#sidewall"/></svg><svg class="ic"><use href="#ball"/></svg>
    <span>Hydraulic Wormhole</span><svg class="ic"><use href="#hydrant"/></svg><span>Strainer</span><svg class="ic"><use href="#fdc"/></svg><svg class="ic sh"><use href="#gimbal"/></svg><svg class="ic sh"><use href="#hangpipe"/></svg><svg class="ic sh"><use href="#washer"/></svg><span>Hanger Assembly...</span><svg class="ic"><use href="#hangdim"/></svg><svg class="ic"><use href="#gimdim"/></svg><span>Parts Profile...</span><b class="more"></b></div>
</div>
<div class="bar">
  <div class="tb tb-detail"><i class="grip"></i><span>Create Detail...</span><svg class="ic"><use href="#detail"/></svg><svg class="ic"><use href="#hidesel"/></svg><span>Hide Layers</span><span>Isolate Layers</span><span class="off">Unisolate Layers</span><span>Interference Checking...</span><b class="more"></b></div>
  <div class="tb tb-calc"><i class="grip"></i><span>Hydraulic Calculations...</span><svg class="ic"><use href="#graph"/></svg><svg class="ic"><use href="#book"/></svg><svg class="ic"><use href="#grid"/></svg><svg class="ic"><use href="#maglasso"/></svg><svg class="ic"><use href="#newpage"/></svg><svg class="ic"><use href="#eraser"/></svg><svg class="ic"><use href="#board"/></svg><svg class="ic"><use href="#preview"/></svg><svg class="ic"><use href="#printoff"/></svg><svg class="ic"><use href="#props"/></svg><svg class="ic"><use href="#print"/></svg><svg class="ic"><use href="#puzzle"/></svg><svg class="ic"><use href="#sheet"/></svg><b class="more"></b></div>
  <div class="tb tb-elev"><i class="grip"></i><svg class="ic"><use href="#elev"/></svg><span>Elevate to Pipes</span><span>Elevate Beams...</span><svg class="ic"><use href="#parts"/></svg><svg class="ic"><use href="#tag"/></svg><svg class="ic"><use href="#tag2"/></svg><b class="more"></b></div>
  <div class="tb tb-leg"><i class="grip"></i><svg class="ic"><use href="#beam"/></svg><svg class="ic"><use href="#blackstar"/></svg><span>Sprinkler Legend</span><b class="more"></b></div>
</div>

<div class="work">
  <div class="left-and-doc">
    <div class="main">
      <aside class="side">
        <div class="panel">
          <div class="phead"><span>Layers</span><svg viewBox="0 0 28 12" fill="none" stroke="#444"><path d="M2 7h8M4 7V1.500h5V7M6.500 7v4M8 2v5"/><path d="M19 2l7 8M26 2l-7 8" stroke-width="1.400"/></svg></div>
          <div class="ptools"><svg class="ic"><use href="#lnew"/></svg><svg class="ic"><use href="#ldel"/></svg><i class="sep"></i><svg class="ic"><use href="#ledit"/></svg><svg class="ic"><use href="#lprops"/></svg><i class="sep"></i><svg class="ic"><use href="#lchecks"/></svg><svg class="ic"><use href="#ltree"/></svg><i class="sep"></i><svg class="ic"><use href="#lopen"/></svg></div>
          <div class="row thead"><span>Name</span><span>V.</span><span>S.</span><span>A.</span><span>C.</span><span>Elements</span><span></span></div>
          <div class="tree">
            <svg class="lines" width="36" height="238" fill="none"><path d="M7.500 9v221M8 9.500h7M8 26.500h7M8 196.500h7M8 213.500h7M8 230.500h7M23 26v153M23 43.500h7M23 60.500h7M23 77.500h7M23 94.500h7M23 111.500h7M23 128.500h7M23 145.500h7M23 162.500h7M23 179.500h7" stroke="#999" stroke-dasharray="1 1"/><g fill="#fff" stroke="#848484"><path d="M3.500 21.500h8v8h-8zM3.500 191.500h8v8h-8zM3.500 225.500h8v8h-8z"/></g><path d="M5 25.500h5M5 195.500h5M7.500 193v5M5 229.500h5M7.500 227v5" stroke="#000"/></svg>
            <div class="row"><span>0</span><svg><use href="#eye"/></svg><svg class="m"><use href="#magnet"/></svg><i></i><b></b><em>34</em></div>
            <div class="row"><span>SPRINKLER S...</span><svg><use href="#eye"/></svg><svg class="m"><use href="#magnet"/></svg><i></i><b></b><em>0</em></div>
            <div class="row sub"><span>SPRINKLERS</span><svg><use href="#eye"/></svg><svg class="m"><use href="#magnet"/></svg><i></i><b></b><em>4</em></div>
            <div class="row sub"><span>PIPES</span><svg><use href="#eye"/></svg><svg class="m"><use href="#magnet"/></svg><i></i><b></b><em>19</em></div>
            <div class="row sub"><span>HYDRAULI...</span><svg><use href="#eye"/></svg><svg class="m"><use href="#magnet"/></svg><i></i><b></b><em>1</em></div>
            <div class="row sub sel"><span>AREAS</span><svg><use href="#eye"/></svg><svg class="m"><use href="#magnet"/></svg><i></i><b></b><em>13</em></div>
            <div class="row sub"><span>FITTINGS</span><svg><use href="#eye"/></svg><svg class="m"><use href="#magnet"/></svg><i></i><b></b><em>28</em></div>
            <div class="row sub"><span>SUPPLY</span><svg><use href="#eye"/></svg><svg class="m"><use href="#magnet"/></svg><i></i><b class="blue"></b><em>1</em></div>
            <div class="row sub"><span>HANGERS</span><svg><use href="#eye"/></svg><svg class="m"><use href="#magnet"/></svg><i></i><b></b><em>3</em></div>
            <div class="row sub"><span>DETAILS</span><svg><use href="#eye"/></svg><svg class="m"><use href="#magnet"/></svg><i></i><b></b><em>0</em></div>
            <div class="row sub"><span>NOTES</span><svg><use href="#eye"/></svg><svg class="m"><use href="#magnet"/></svg><i></i><b class="red"></b><em>1</em></div>
            <div class="row"><span>BACKGROUND</span><svg><use href="#eye"/></svg><svg class="m"><use href="#magnet"/></svg><i></i><b></b><em>0</em></div>
            <div class="row"><span>BENCHMARK</span><svg><use href="#eye"/></svg><svg class="m"><use href="#magnet"/></svg><i></i><b></b><em>1</em></div>
            <div class="row"><span>SPRINKLER S...</span><svg><use href="#eye"/></svg><svg class="m"><use href="#magnet"/></svg><i></i><b></b><em>0</em></div>
          </div>
        </div>
        <div class="ptabs"><span class="on">La...</span><span>D...</span><span>Sy...</span><span>Al...</span><span>Se...</span><span>D...</span><span>Te...</span><span>Pa...</span><span>N...</span><span>Tr...</span><span>Fa...</span></div>
      </aside>

      <section class="doc">
        <div class="dtabs"><span class="dtab">Start Page</span><span class="dtab on">Simple Threaded System.cad<svg viewBox="0 0 10 10"><path d="M1.500 1.500l7 7M8.500 1.500l-7 7" stroke="#555" stroke-width="1.300"/></svg></span><svg class="nav" viewBox="0 0 30 12" fill="none" stroke="#444"><path d="M6 2v8L2 6zM21 2v8l4-4z"/></svg></div>
        <div class="frame">
          <div class="view">
            <svg class="canvas" width="1518" height="715" viewBox="330 210 1518 715">
              <defs>
                <linearGradient id="ph" x2="0" y2="1"><stop offset="0" stop-color="#777"/><stop offset=".25" stop-color="#ccc"/><stop offset=".5" stop-color="#e2e2e2"/><stop offset=".8" stop-color="#b5b5b5"/><stop offset="1" stop-color="#555"/></linearGradient>
                <linearGradient id="pv"><stop offset="0" stop-color="#777"/><stop offset=".25" stop-color="#ccc"/><stop offset=".5" stop-color="#e2e2e2"/><stop offset=".8" stop-color="#b5b5b5"/><stop offset="1" stop-color="#666"/></linearGradient>
                <g id="hex"><path d="M-36.500 0L-18.300-36.500H18.300L36.500 0 18.300 36.500H-18.300z" fill="#ff0" stroke="#000" stroke-width="1.300"/></g>
                <g id="cpl"><path d="M-3.500-4h7v8h-7z" fill="#444"/></g>
              </defs>
              <rect x="330" y="210" width="1518" height="715" fill="#5a5a5a"/>
              <rect x="330" y="210" width="360" height="715" fill="#fff"/>
              <path d="M330 217.500h361M690.500 210v715" stroke="#000"/>
              <g class="cad"><text x="338" y="296.500" textLength="244">Ordinary Group II</text><text x="338" y="341.500">4</text><text x="338" y="387.500">4</text><text x="338" y="432.500">0</text><text x="338" y="478.500" textLength="41">5.6</text><text x="338" y="524" textLength="42">0.5</text><text x="338" y="569.500" textLength="168">0.20 gpm/ft²</text><text x="338" y="615" textLength="168">0.93 gpm/ft²</text><text x="338" y="660.500" textLength="323">1500 ft² (Actual 115 ft²)</text><text x="338" y="751.500" textLength="58">0.00</text><text x="338" y="797" textLength="75">0.000</text><text x="338" y="888.500" textLength="92">85.000</text><text x="338" y="934" textLength="92">55.000</text></g>
              <path d="M1502.500 210v549.500M1502 259h346M1502 304.500h346M1502 350h346M1502 395.500h346M1502 441h346M1502 486.500h346M1502 532h346M1502 577.500h346M1502 623h346M1502 668.500h346M1502 714h346M1502 759.500h346" fill="none" stroke="#000" stroke-width="1.400"/>
              <g class="cad"><text x="1774" y="238" class="big">Hyd</text><text x="1514" y="292">OCCUPANCY CLASSIFIC</text><text x="1514" y="337.500" textLength="255">DENSITY (gpm/ft²)</text><text x="1514" y="383.500">TOTAL HOSE STREAMS</text><text x="1514" y="428.500" textLength="215">DRY CAPACITY</text><text x="1514" y="474.500" textLength="334">TOTAL HEADS FLOWIN</text><text x="1514" y="519.500" textLength="153">K-FACTOR</text><text x="1514" y="565.500">TOTAL WATER REQUIRE</text><text x="1514" y="610.500">TOTAL PRESSURE REQ</text><text x="1514" y="656.500" textLength="304">BASE of RISER (gpm)</text><text x="1514" y="702" textLength="286">BASE of RISER (psi)</text><text x="1514" y="747.500" textLength="315">SAFETY MARGIN (psi)</text></g>
              <path d="M980 356h11v422.500h-11zM985 351h213v11H985zM1187 351h11v432h-11zM986 773h212v10.500H986z"/>
              <path d="M986 588v180" stroke="#555" stroke-dasharray="30 8"/>
              <path d="M826.500 585v193.500h150" fill="none" stroke="#6c6c6c" stroke-dasharray="24 14"/>
              <g class="cad"><text x="767.500" y="577.500" textLength="569">Ordinary Group II•0.20 gpm/ft² for 115 ft²</text></g>
              <path d="M1031.500 534h115.500v4h-115.500zM1031.500 539.500h115.500v4.500h-115.500z" fill="#7c2c2c"/>
              <rect x="1086.500" y="365" width="5" height="348" fill="url(#pv)"/>
              <path d="M1091 378h24" stroke="#ddd" stroke-width="4"/>
              <g stroke="#000" stroke-width="1.400"><path d="M1078 413.500l22-21M1078 489.500l22-21M1078 636l22-21"/></g>
              <rect x="862" y="572.500" width="568" height="15.500" fill="url(#ph)"/>
              <rect x="840" y="594" width="15" height="106" fill="url(#pv)"/>
              <path d="M832 573h32v15H832z" fill="#f58a00"/><path d="M841 586h13v9h-13z" fill="#f58a00"/>
              <g fill="#ff9200" stroke="#8a4b00" stroke-width=".8"><path d="M831 569h3.500v22.500H831zM861 569h3.500v22.500H861zM837 593h20v3.500h-20zM1408.500 569h3v22.500h-3zM1427 569h3.500v22.500H1427z"/></g>
              <use href="#cpl" x="1089" y="378"/><use href="#cpl" x="1118" y="378"/><use href="#cpl" x="1089" y="442"/><use href="#cpl" x="1089" y="516"/><use href="#cpl" x="1089" y="562"/><use href="#cpl" x="1089" y="580"/><use href="#cpl" x="1089" y="669.500"/><use href="#cpl" x="1089" y="712"/>
              <g fill="none" stroke="#bbb" stroke-width=".8"><circle cx="1089" cy="516" r="5" stroke="#888"/><circle cx="1089" cy="562" r="5" stroke="#888"/><circle cx="1089" cy="580" r="6.500" stroke-dasharray="3 1.500"/></g>
              <path d="M1091 713h50" stroke="#ddd" stroke-width="3"/>
              <path d="M1086 669.500C1072 670 1056 660 1052 655S1054 648 1056.500 656C1058 680 1036 715 1031.500 735" fill="none" stroke="#ccc" stroke-width="1.500"/>
              <circle cx="847" cy="712" r="16" fill="none" stroke="#ccc" stroke-dasharray="8 2"/>
              <path d="M832 704h10v16h-10z" fill="#fd5"/><path d="M836 704a13 13 0 0 0 1 16l20 1a13 13 0 0 0 0-17" fill="#0a0a80"/>
              <path d="M864 706h44v9.500h-44z" fill="url(#ph)"/><path d="M873 715h4.500v46H873z" fill="url(#pv)"/><path d="M901 718h8v46h-8z" fill="url(#pv)"/>
              <path d="M872 704h22v13h-22z" fill="#f79a08"/><path d="M878 706h7v8h-7z" fill="#fe6"/>
              <g fill="#ffb52e" stroke="#ff8"><path d="M863 703h3v14h-3zM892 703h3v14h-3zM897 720h15v4h-15z"/></g>
              <path d="M903 704q9 0 9 13h-9z" fill="#eee" stroke="#ffa51d" stroke-width="1.500"/>
              <circle cx="875" cy="762" r="2.500" fill="#666" stroke="#aaa"/>
              <path d="M901 758h8v14h-6l-3-4z" fill="#b5e853"/>
              <path d="M839 699h16v14a8 8 0 0 1-16 0z" fill="#f28400" stroke="#844400"/><path d="M837 696.500h20v4h-20z" fill="#ff9200" stroke="#844400" stroke-width=".8"/>
              <path d="M837 730.500h20a10 10 0 0 1-20 0z" fill="#e00000"/><path d="M847 721v10" stroke="#d22" stroke-width="1.500"/>
              <use href="#hex" x="1201.500" y="455.800"/><use href="#hex" x="1172.300" y="528.600"/><use href="#hex" x="1172.300" y="658.500"/><use href="#hex" x="1172.300" y="731"/><use href="#hex" x="1172.300" y="804"/><use href="#hex" x="1172.300" y="877"/><use href="#hex" x="1172.300" y="953.500"/><use href="#hex" x="930.300" y="788.700"/><use href="#hex" x="930.300" y="861.300"/>
              <path d="M1139 534h8v4h-8zM1139 539.500h8v4.500h-8z" fill="#c98714"/>
              <g stroke="#000" stroke-width="1.300"><path d="M1119 378l64 41M1090 443l64 49M1090 451l61.500 454M1092 584l62 38M1092 586l62 109M1092 675l60 165M1090 715l64 52M1144 713l13 55M1128 767l24 72M1031.500 735l45.500 190M856 717l56 35.500M856 719l56 106"/></g>
              <g fill="none" stroke="#3a3aff" stroke-width="1.200"><circle cx="1118.500" cy="378" r="9"/><circle cx="1089" cy="442" r="9"/><circle cx="1144.500" cy="713" r="9.500"/><circle cx="1031.500" cy="735" r="9"/></g>
              <g fill="#3434ff"><circle cx="1144.500" cy="713" r="5.500"/><circle cx="1031.500" cy="735" r="5.500"/></g><path d="M1142 711h4v4h-4zM1029.500 733h4v4h-4z" fill="#222"/>
              <g class="cad mid"><text x="1201.500" y="466">2</text><text x="1172" y="539">500</text><text x="1172" y="668.500">501</text><text x="1172" y="741.500">502</text><text x="1172" y="814.500">505</text><text x="1172" y="887">506</text><text x="930" y="799">503</text><text x="930" y="871.500">504</text></g>
            </svg>
            <div class="vsplit"><i></i></div>
            <div class="hsplit"><i></i></div>
          </div>
          <div class="stabs">
            <svg width="64" height="18"><g fill="#e4e4e4"><path d="M0 2h13v13H0zM16 2h13v13H16zM32 2h13v13H32zM48 2h13v13H48z"/></g><g fill="#555"><path d="M3 5h1v7H3zM9 5v7L5 8.500zM25 5v7l-4-3.500zM37 5v7l4-3.500zM51 5v7l4-3.500zM56 5h1v7h-1z"/></g></svg>
            <span class="model">*Model</span><span class="sheet">Sheet 1</span>
          </div>
        </div>
      </section>
    </div>
    <footer class="status"><span class="msg">Increases the camera magnification.</span><span class="s1">4 selected</span><span class="s2">0.20 gpm/ft²</span><span class="s3">1500 ft² (115 ft²)</span><span class="s4">ø 2 (2.0670)</span><span class="s5"># Off</span><span class="s6">Foot</span></footer>
  </div>
  <div class="vbars">
    <div class="vb vb-a"><i class="vgrip"></i><span class="imp">Import DWG</span><svg class="ic"><use href="#mapfold"/></svg><svg class="ic"><use href="#pages"/></svg><svg class="ic"><use href="#cubes"/></svg><b class="vmore"></b></div>
    <div class="vb vb-b"><i class="vgrip"></i><svg class="ic"><use href="#armover"/></svg><svg class="ic"><use href="#wandline"/></svg><i class="vsep"></i><svg class="ic"><use href="#peak"/></svg><svg class="ic"><use href="#slope"/></svg><i class="vsep"></i><svg class="ic"><use href="#wandroute"/></svg><svg class="ic"><use href="#redtool"/></svg><svg class="ic"><use href="#nodes"/></svg><b class="vmore"></b></div>
    <div class="vb vb-c"><i class="vgrip"></i><span class="glsl">GLSL</span><span class="on">OpenGL®</span><svg class="ic"><use href="#moncolor"/></svg><svg class="ic"><use href="#mongray"/></svg><b class="vmore"></b></div>
  </div>
</div>

<div class="bar">
  <div class="tb tb-view"><i class="grip"></i><svg class="ic"><use href="#panes"/></svg><span class="on">Layers</span><span class="on">Parts Picker</span><span class="on">Alerts</span><span class="on">Select</span><span class="on">Symbols</span><svg class="ic sm sh"><use href="#bleft"/></svg><span>-Y</span><svg class="ic sm sh"><use href="#bup"/></svg><span>+X</span><svg class="ic sm sh"><use href="#bright"/></svg><span>+Y</span><svg class="ic sm sh"><use href="#bdown"/></svg><span>-X</span><b class="more"></b></div>
  <div class="tb tb-go"><i class="grip"></i><svg class="ic"><use href="#kright"/></svg><i class="field"></i><b class="more"></b></div>
  <div class="tb tb-cam"><i class="grip"></i><svg class="ic"><use href="#undim"/></svg><svg class="ic"><use href="#selblue"/></svg><svg class="ic"><use href="#checks"/></svg><svg class="ic"><use href="#selstar"/></svg><svg class="ic"><use href="#target"/></svg><span class="on">Lock On Target</span><span class="on hot"><svg class="ic"><use href="#zoomin"/></svg></span><svg class="ic"><use href="#zoomout"/></svg><svg class="ic sm sh"><use href="#pup"/></svg><svg class="ic sm sh"><use href="#pleft"/></svg><svg class="ic sm sh"><use href="#pccw"/></svg><svg class="ic sm sh"><use href="#pdown"/></svg><svg class="ic sm sh"><use href="#pright"/></svg><svg class="ic sm sh"><use href="#pcw"/></svg><svg class="ic sh"><use href="#rot1"/></svg><svg class="ic sh"><use href="#rot2"/></svg><svg class="ic sm sh"><use href="#house1"/></svg><svg class="ic sm sh"><use href="#house2"/></svg><svg class="ic sm sh"><use href="#house3"/></svg><svg class="ic sm sh"><use href="#house4"/></svg><svg class="ic sh"><use href="#fit"/></svg><svg class="ic sm sh"><use href="#plane"/></svg><span class="on"><svg class="ic sm"><use href="#plan"/></svg></span><span>Refresh Elements</span><b class="more"></b></div>
</div>
</body>
</html>
```
FILE: styles.css
```css
* { box-sizing: border-box; }
html, body { margin: 0; height: 1032px; overflow: hidden; }
body { display: flex; flex-direction: column; width: 1920px; background: #525252; font: 12px/16px "Open Sans", "Noto Sans", sans-serif; letter-spacing: -0.35px; color: #000; }
.defs { position: absolute; }
i, em { font-style: normal; }
span { white-space: nowrap; }

/* title and menu */
.title { flex: none; height: 23px; display: flex; align-items: center; background: linear-gradient(90deg, #f8f2df 0, #faf0e8 620px, #fbf0ec 1200px, #f5f2d0 1800px); }
.logo { width: 15px; height: 18px; margin: 0 7px 0 3px; }
.title-text { flex: 1; color: #111; letter-spacing: -0.31px; }
.winbtns { width: 110px; height: 20px; margin-right: 18px; flex: none; }
.menu { flex: none; height: 23px; display: grid; grid-template-columns: 29px 33px 35px 45px 46px 43px 53px 72px 70px 76px 56px 68px 46px 44px 49px 91px 65px 57px 40px 59px 1fr 46px; align-items: center; color: #fff; font-size: 11.5px; line-height: 14px; padding-bottom: 1px; letter-spacing: -.2px; }
.mlogo { width: 16px; height: 15px; margin-left: 3px; }
.mdi { width: 44px; height: 14px; margin-top: 6px; }

/* horizontal toolbars */
.bar { flex: none; height: 46px; display: flex; }
.tb { height: 46px; display: grid; align-items: center; justify-items: center; background: linear-gradient(#d0d3d8 0, #c5c8ce 45%, #a2a7b1 95%, #979da8 100%); border-bottom: 1px solid #4b5460; border-radius: 3px 3px 0 0; flex: none; font-size: 11.5px; letter-spacing: -0.25px; }
.grip { width: 3px; height: 28px; background: repeating-linear-gradient(#4d525b 0 2px, #e8eaec 2px 4px); }
.ic { width: 30px; height: 30px; display: block; overflow: visible; shape-rendering: crispEdges; transform: scaleX(1.06); }
.ic.sm { width: 27px; height: 27px; }
.sh { filter: drop-shadow(2px 2px 0 rgba(90, 90, 90, .45)); }
.t3 { font-family: "Liberation Sans", sans-serif; font-weight: bold; }
.off { color: #8b8e94; }
.more { grid-column: -2; justify-self: stretch; height: 45px; background: linear-gradient(#a9aeb8, #757b86 55%, #4e5560); position: relative; border-radius: 0 3px 0 0; }
.more::before, .vmore::before { content: ""; position: absolute; left: 6px; bottom: 13px; width: 9px; height: 2px; background: #fff; }
.more::after { content: ""; position: absolute; left: 6px; bottom: 4px; border: 4px solid transparent; border-bottom: 0; border-top: 6px solid #e8e8e8; }
.tb-file { width: 594px; grid-template-columns: 11px repeat(8, 44px) 104px 104px 1fr 19px; }
.tb-hyd { width: 1210px; grid-template-columns: 11px repeat(7, 44px) 104px 44px 44px 102px 44px 219px 56px 44px 44px 71px 44px 52px 1fr 19px; }
.tb-parts { width: 1890px; grid-template-columns: 9px 68px repeat(9, 44px) 98px 87px 44px 45px 69px repeat(9, 44px) 113px 44px 50px repeat(4, 44px) 106px 44px 44px 78px 1fr 19px; }
.tb-detail { width: 571px; grid-template-columns: 9px 85px 44px 44px 66px 77px 92px 132px 1fr 19px; }
.tb-calc { width: 736px; grid-template-columns: 9px 133px repeat(13, 44px) 1fr 19px; }
.tb-elev { width: 386px; grid-template-columns: 10px 44px 88px 89px repeat(3, 44px) 1fr 19px; }
.tb-leg { width: 216px; grid-template-columns: 10px 44px 44px 96px 1fr 19px; }
.tb-view { width: 557px; grid-template-columns: 10px 44px 40px 67px 38px 39px 52px 40px 16px 44px 20px 44px 19px 44px 15px 1fr 19px; }
.tb-go { width: 143px; grid-template-columns: 9px 40px 1fr 19px; }
.tb-cam { width: 1183px; grid-template-columns: 8px repeat(5, 44px) 88px 44px repeat(15, 43.93px) 44px 96px 1fr 19px; }
.field { width: 61px; height: 15px; background: #fff; }
.on { justify-self: stretch; display: flex; align-items: center; justify-content: center; height: 41px; margin: 0 1px; border: 1px solid #9c9c98; background: linear-gradient(#fbd7ac, #fcc789 30%, #fdab4b 34%, #fdbd63 60%, #fde78c 96%); }
.on.hot { background: linear-gradient(#fff4cf, #ffe9a2 38%, #ffcb3f 42%, #ffd658 65%, #fff0a5); }

/* workspace */
.work { flex: none; height: 802px; display: flex; }
.left-and-doc { width: 1872px; display: flex; flex-direction: column; }
.main { height: 783px; display: flex; }
.side { width: 323px; display: flex; flex-direction: column; }
.panel { width: 319px; height: 760px; border: 2px solid #e8e8e8; border-top-width: 1px; background: #fff; padding-left: 1px; }
.phead { height: 20px; margin-left: -1px; background: #9d9f9e; display: flex; align-items: center; justify-content: space-between; padding: 0 1px 0 3px; color: #333; letter-spacing: 0; font-size: 11.5px; }
.phead svg { width: 28px; height: 12px; margin-right: 2px; }
.ptools { height: 44px; margin-top: 2px; background: linear-gradient(#d0d3d8, #c5c8ce 45%, #9aa0aa); display: flex; align-items: center; padding-left: 9px; gap: 14px; overflow: hidden; }
.ptools .ic { flex: none; }
.sep { flex: none; width: 2px; height: 26px; border-left: 1px solid #6f747d; border-right: 1px solid #f0f0f0; margin: 0 -4px; }
.row { display: grid; grid-template-columns: 100px 20px 20px 20px 20px 74px 1fr; height: 17px; align-items: center; letter-spacing: -0.25px; font-size: 12px; }
.thead { height: 19px; background: linear-gradient(#fff, #eee); border-bottom: 1px solid #d5d5d5; letter-spacing: 0; font-size: 11.5px; }
.thead span { padding-left: 5px; height: 18px; line-height: 19px; border-right: 1px solid #c9c9c9; }
.thead span:last-child { border: 0; }
.tree { position: relative; }
.lines { position: absolute; left: 0; top: 0; }
.tree .row { width: 255px; }
.tree .row span { padding-left: 17px; }
.tree .row.sub span { margin-left: 30px; padding-left: 2px; align-self: stretch; line-height: 17px; }
.row svg { width: 16px; height: 10px; }
.row svg.m { width: 14px; height: 14px; margin-left: 1px; }
.row b { width: 18px; height: 14px; background: #000; border: 1px solid #999; border-left-color: #333; }
.row b.blue { background: #00f; }
.row b.red { background: red; }
.row em { padding-left: 3px; }
.row.sel { background: linear-gradient(90deg, #fff 30px, #0078d7 30px); color: #fff; }
.row.sel svg { opacity: .65; }
.ptabs { display: grid; grid-template-columns: repeat(11, 27px); padding-left: 3px; height: 21px; color: #fff; text-align: center; line-height: 22px; font-size: 11.5px; letter-spacing: 0; }
.ptabs .on { display: block; background: linear-gradient(#fff, #d6dae2); color: #000; height: 20px; border: 1px solid #b5dce0; border-radius: 0 0 4px 4px; line-height: 20px; }

/* document */
.doc { width: 1548px; display: flex; flex-direction: column; }
.dtabs { height: 19px; padding-top: 3px; display: flex; color: #fff; letter-spacing: -.15px; line-height: 16px; font-size: 11.5px; }
.dtab { padding-left: 8px; width: 71px; }
.dtab.on { display: flex; justify-content: flex-start; gap: 8px; width: 173px; height: 17px; margin: 0; padding-left: 3px; border: 0; border-radius: 4px 4px 0 0; background: linear-gradient(#fff, #dfe3ea); color: #000; font-weight: bold; letter-spacing: -.64px; }
.dtab svg { width: 9px; height: 9px; }
.nav { width: 30px; height: 12px; margin-left: auto; margin-right: 4px; }
.frame { height: 764px; background: #777; border: 3px solid #ececec; border-top-width: 2px; border-right: 5px solid #efefef; border-bottom: 6px solid #ededed; padding: 5px 0 0 4px; }
.view { display: grid; grid-template: 715px 17px / 1518px 1fr; }
.canvas { display: block; }
.cad { font: bold 29.5px "Liberation Sans", sans-serif; letter-spacing: 0; }
.cad .big { font-size: 44.5px; }
.mid { text-anchor: middle; }
.vsplit { background: #f0f0f0; display: flex; align-items: center; padding-left: 8px; padding-bottom: 95px; }
.vsplit i { width: 2px; height: 17px; background: #888; }
.hsplit { background: #f0f0f0; grid-column: 1 / 3; padding: 9px 0 0 785px; }
.hsplit i { display: block; width: 17px; height: 2px; background: #888; }
.stabs { display: flex; height: 19px; padding-top: 1px; background: linear-gradient(#4d4d4d, #777 30%); border-bottom: 1px solid #888; line-height: 17px; }
.model, .sheet { height: 17px; }
.model { width: 60px; padding-left: 6px; margin-left: 3px; background: #fff; font-weight: bold; letter-spacing: -.5px; clip-path: polygon(0 0, 100% 0, 78% 100%, 0 100%); }
.sheet { width: 60px; margin-left: -9px; padding-left: 8px; background: #d3dae5; clip-path: polygon(14% 0, 100% 0, 78% 100%, 0 100%); }

.status { height: 19px; display: flex; align-items: center; color: #fff; background: linear-gradient(#3d4250 0, #3a3e48 45%, #2f2f2d 50%); letter-spacing: -.3px; font-size: 11.5px; line-height: 19px; padding-top: 1px; }
.msg { flex: 1; padding-left: 4px; }
.status .s1, .status .s2, .status .s3, .status .s4, .status .s5, .status .s6 { height: 16px; line-height: 17px; border-left: 1px solid #666; padding-left: 3px; }
.s1 { width: 58px; border-right: 1px solid #666; margin-right: 5px; }
.s2 { width: 69px; }
.s3 { width: 87px; }
.s4 { width: 64px; }
.s5 { width: 33px; }
.s6 { width: 30px; }

/* vertical toolbars */
.vbars { width: 48px; }
.vb { display: grid; justify-items: center; align-items: center; background: linear-gradient(90deg, #d0d3d8, #c5c8ce 45%, #9aa0aa); border-left: 1px solid #4b5460; font: 12px "Liberation Sans", sans-serif; letter-spacing: 0; }
.vb-a { height: 233px; grid-template-rows: 11px 73px repeat(3, 42px) 1fr 20px; }
.vb-b { height: 342px; grid-template-rows: 9px 42px 42px 8px 42px 42px 9px repeat(3, 42px) 1fr 20px; }
.vb-c { height: 220px; grid-template-rows: 10px 39px 65px 42px 42px 1fr 20px; }
.vb span { writing-mode: vertical-rl; }
.vb .imp { letter-spacing: .15px; padding-top: 3px; }
.vb .glsl { padding-top: 4px; }
.vb .on { width: 43px; height: 63px; justify-self: center; padding-top: 5px; letter-spacing: .2px; }
.vgrip { width: 31px; height: 3px; background: repeating-linear-gradient(90deg, #4d525b 0 2px, #e8eaec 2px 4px); }
.vsep { width: 28px; height: 2px; background: #fff; border-top: 1px solid #6f747d; }
.vmore { grid-row: -2; position: relative; justify-self: stretch; height: 20px; background: linear-gradient(90deg, #4e5560, #a9aeb8); }
.vmore::before { left: 31px; top: 6px; width: 2px; height: 9px; }
.vmore::after { content: ""; position: absolute; left: 37px; top: 5px; border: 5px solid transparent; border-right: 0; border-left: 6px solid #444; }
```
